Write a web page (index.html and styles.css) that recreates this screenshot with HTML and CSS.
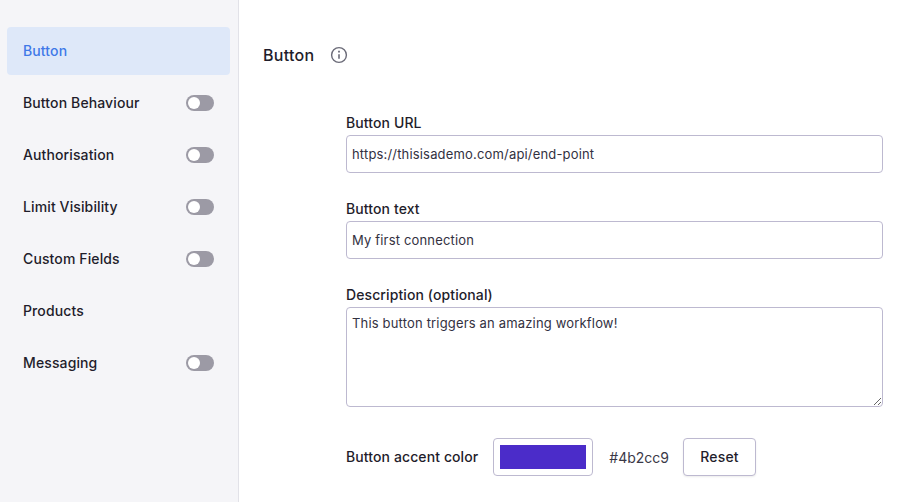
FILE: index.html
```html
<!DOCTYPE html>
<html lang="en">

<head>
  <meta charset="UTF-8">
  <meta name="viewport" content="width=device-width, initial-scale=1.0">
  <title>Button settings</title>
  <link rel="stylesheet" href="styles.css">
</head>

<body>
  <aside class="sidebar">
    <a class="nav-item active"><span class="nav-label">Button</span></a>
    <a class="nav-item"><span class="nav-label">Button Behaviour</span> <span class="toggle"></span></a>
    <a class="nav-item"><span class="nav-label">Authorisation</span> <span class="toggle"></span></a>
    <a class="nav-item"><span class="nav-label">Limit Visibility</span> <span class="toggle"></span></a>
    <a class="nav-item"><span class="nav-label">Custom Fields</span> <span class="toggle"></span></a>
    <a class="nav-item"><span class="nav-label">Products</span></a>
    <a class="nav-item"><span class="nav-label">Messaging</span> <span class="toggle"></span></a>
  </aside>

  <main class="content">
    <div class="title-row">
      <h1>Button</h1>
      <svg class="info" width="18" height="18" viewBox="0 0 18 18" fill="none" stroke="#6b6b78" stroke-width="1.4">
        <circle cx="9" cy="9" r="7.4"></circle>
        <path d="M9 8.2v4.6" stroke-width="1.6"></path>
        <path d="M9 4.8v1.8" stroke-width="1.8"></path>
      </svg>
    </div>

    <form class="form">
      <div class="field">
        <label for="url">Button URL</label>
        <input type="text" id="url" value="https://thisisademo.com/api/end-point">
      </div>
      <div class="field">
        <label for="text">Button text</label>
        <input type="text" id="text" value="My first connection">
      </div>
      <div class="field">
        <label for="desc">Description (optional)</label>
        <textarea id="desc">This button triggers an amazing workflow!</textarea>
      </div>
      <div class="color-row">
        <span class="color-label">Button accent color</span>
        <span class="swatch"><span class="swatch-fill"></span></span>
        <span class="hex">#4b2cc9</span>
        <button type="button" class="reset">Reset</button>
      </div>
    </form>
  </main>
</body>
</html>
```

FILE: styles.css
```css
* {
  box-sizing: border-box;
}

html, body {
  height: 100%;
}

body {
  font-family: Inter, sans-serif;
  margin: 0;
  background-color: #ffffff;
  color: #1f1d2b;
  display: flex;
  overflow: hidden;
}

.sidebar {
  width: 239px;
  flex-shrink: 0;
  padding: 27px 8px 0 7px;
  background-color: #f5f5f8;
  border-right: 1px solid #e2e2e8;
}

.nav-item {
  height: 48px;
  margin-bottom: 4px;
  padding: 0 16px;
  display: flex;
  align-items: center;
  justify-content: space-between;
  font-size: 14px;
  font-weight: 500;
  letter-spacing: 0.12px;
  border-radius: 4px;
}

.nav-label {
  margin-bottom: 2px;
}

.nav-item.active {
  background-color: #dee8f9;
  color: #3f78e8;
}

.toggle {
  position: relative;
  width: 28px;
  height: 16px;
  border-radius: 8px;
  background-color: #9c9aa5;
}

.toggle::after {
  content: "";
  position: absolute;
  top: 2px;
  left: 2px;
  width: 12px;
  height: 12px;
  border-radius: 50%;
  background-color: #ffffff;
}

.content {
  flex: 1;
  padding: 44px 36px 0 24px;
}

.title-row {
  display: flex;
  align-items: center;
  gap: 15px;
  height: 21px;
}

h1 {
  margin: 0;
  font-size: 16px;
  font-weight: 500;
  letter-spacing: 0.3px;
}

.info {
  margin-top: 1px;
}

.form {
  margin: 49px 0 0 83px;
}

.field {
  margin-bottom: 27px;
}

label {
  display: block;
  margin-bottom: 3px;
  font-size: 14px;
  line-height: 18px;
  font-weight: 500;
  letter-spacing: 0.1px;
}

input, textarea {
  display: block;
  width: 100%;
  padding: 0 5px;
  font-family: Inter, sans-serif;
  font-size: 13px;
  letter-spacing: 0.17px;
  color: #33313f;
  background: #ffffff;
  border: 1px solid #bdb9d0;
  border-radius: 4px;
  outline: none;
}

input {
  height: 38px;
}

textarea {
  height: 100px;
  padding-top: 7px;
  line-height: 16px;
}

.color-row {
  display: flex;
  align-items: center;
  margin-top: 31px;
}

.color-label {
  font-size: 14px;
  font-weight: 500;
  letter-spacing: 0.1px;
  margin-right: 15px;
  margin-bottom: 2px;
}

.swatch {
  width: 100px;
  height: 38px;
  padding: 6px;
  border: 1px solid #bdb9d0;
  border-radius: 4px;
  margin-right: 16px;
}

.swatch-fill {
  display: block;
  height: 100%;
  background-color: #4b2cc9;
}

.hex {
  font-size: 14px;
  margin-right: 14px;
  color: #3a3847;
}

.reset {
  width: 73px;
  height: 38px;
  padding: 0 0 2px;
  font-family: Inter, sans-serif;
  font-size: 14px;
  font-weight: 500;
  letter-spacing: 0.2px;
  color: #1f1d2b;
  background: #ffffff;
  border: 1px solid #bdb9d0;
  border-radius: 4px;
  box-shadow: 0 1px 2px rgba(0, 0, 0, 0.08);
}
```
